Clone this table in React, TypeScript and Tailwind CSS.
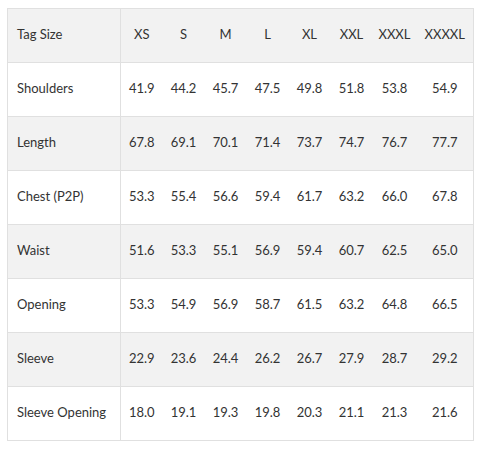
const sizes = ["XS", "S", "M", "L", "XL", "XXL", "XXXL", "XXXXL"];

const rows: [string, string[]][] = [
  ["Shoulders", ["41.9", "44.2", "45.7", "47.5", "49.8", "51.8", "53.8", "54.9"]],
  ["Length", ["67.8", "69.1", "70.1", "71.4", "73.7", "74.7", "76.7", "77.7"]],
  ["Chest (P2P)", ["53.3", "55.4", "56.6", "59.4", "61.7", "63.2", "66.0", "67.8"]],
  ["Waist", ["51.6", "53.3", "55.1", "56.9", "59.4", "60.7", "62.5", "65.0"]],
  ["Opening", ["53.3", "54.9", "56.9", "58.7", "61.5", "63.2", "64.8", "66.5"]],
  ["Sleeve", ["22.9", "23.6", "24.4", "26.2", "26.7", "27.9", "28.7", "29.2"]],
  ["Sleeve Opening", ["18.0", "19.1", "19.3", "19.8", "20.3", "21.1", "21.3", "21.6"]],
];

const colW = ["w-[42px]", "w-[42px]", "w-[42px]", "w-[42px]", "w-[42px]", "w-[42px]", "w-[44px]", "w-[57px]"];

export default function App() {
  return (
    <div className="min-h-[450px] bg-white pl-[7px] pt-[8px] font-['Lato',sans-serif] text-[13px] text-[#333]">
      <table className="w-[467px] table-fixed border-collapse">
        <colgroup>
          <col className="w-[113px]" />
          {colW.map((w, i) => (
            <col key={i} className={w} />
          ))}
        </colgroup>
        <tbody>
          <tr className="h-[54px] bg-[#f2f2f2]">
            <td className="border border-[#e0e0e0] pl-[9px] pb-[2px] text-left">Tag Size</td>
            {sizes.map((s, i) => (
              <td
                key={s}
                className={`border-y border-[#e0e0e0] pb-[2px] text-center ${i === sizes.length - 1 ? "border-r" : ""}`}
              >
                {s}
              </td>
            ))}
          </tr>
          {rows.map(([label, vals], r) => (
            <tr key={label} className={`h-[54px] ${r % 2 === 1 ? "bg-[#f2f2f2]" : "bg-white"}`}>
              <td className="border border-[#e0e0e0] pl-[9px] pb-[2px] text-left whitespace-nowrap">{label}</td>
              {vals.map((v, i) => (
                <td
                  key={i}
                  className={`border-y border-[#e0e0e0] pb-[2px] text-center ${i === vals.length - 1 ? "border-r" : ""}`}
                >
                  {v}
                </td>
              ))}
            </tr>
          ))}
        </tbody>
      </table>
    </div>
  );
}
